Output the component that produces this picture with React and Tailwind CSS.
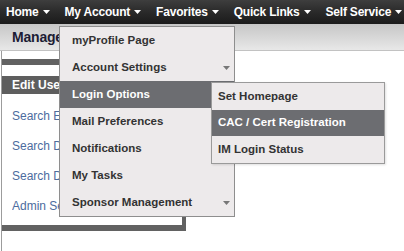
import React from 'react';

const Caret = ({ className }) => (
  <svg width="7" height="4" viewBox="0 0 7 4" className={className}>
    <path d="M0 0h7L3.5 4z" fill="currentColor" />
  </svg>
);

const navItems = ['Home', 'My Account', 'Favorites', 'Quick Links', 'Self Service'];

const accountMenu = [
  { label: 'myProfile Page' },
  { label: 'Account Settings', caret: true },
  { label: 'Login Options', active: true },
  { label: 'Mail Preferences' },
  { label: 'Notifications' },
  { label: 'My Tasks' },
  { label: 'Sponsor Management', caret: true },
];

const loginMenu = [
  { label: 'Set Homepage' },
  { label: 'CAC / Cert Registration', active: true },
  { label: 'IM Login Status' },
];

const links = ['Search Employees', 'Search Dependents', 'Search Documents', 'Admin Settings'];

export default function App() {
  return (
    <div className="relative w-[404px] h-[251px] overflow-hidden bg-white font-['Liberation_Sans',Arial,sans-serif]">
      {/* top nav */}
      <div className="h-[24px] flex items-center gap-[15px] pl-[6px] bg-gradient-to-b from-[#3e3e3e] via-[#2a2a2a] to-[#1b1b1b]">
        {navItems.map((item) => (
          <div key={item} className="flex items-center text-white text-[12px] font-bold tracking-[-0.2px] whitespace-nowrap">
            {item}
            <Caret className="ml-[4px] text-white" />
          </div>
        ))}
      </div>

      {/* page title bar */}
      <div className="h-[27px] flex items-center pl-[12px] border-b border-solid border-[#c2c2c2] bg-gradient-to-b from-[#c6c6c6] to-[#e8e8e8]">
        <span className="max-w-[47px] overflow-hidden whitespace-nowrap text-[14px] font-bold text-[#1c1c34] tracking-[-0.2px]">Manage Users</span>
      </div>

      {/* content, partly hidden behind the open menu */}
      <div className="h-[200px] flex">
        <div className="w-px bg-[#9c9c9c] ml-px" />
        <div className="pt-[8px]">
          <div className="w-[184px] bg-[#626262] pt-[6px] pr-[4px] pb-[6px]">
            <div className="bg-white pt-[11px] pb-[4px]">
              <div className="h-[18px] flex items-center pl-[10px] bg-[#5e5e5e]">
                <span className="max-w-[47px] overflow-hidden whitespace-nowrap text-white text-[12px] font-bold">Edit User Accounts</span>
              </div>
              <div className="mt-[7px]">
                {links.map((l) => (
                  <div key={l} className="h-[30px] flex items-center pl-[10px]">
                    <span className="max-w-[47px] overflow-hidden whitespace-nowrap text-[12px] text-[#4c6c9e]">{l}</span>
                  </div>
                ))}
              </div>
            </div>
          </div>
        </div>
      </div>

      {/* My Account dropdown */}
      <div className="absolute left-[59px] top-[26px] w-[176px] border border-solid border-[#8e8e8e] bg-[#edeaeb]">
        {accountMenu.map((m) => (
          <div
            key={m.label}
            className={`h-[27px] flex items-center justify-between pl-[12px] pr-[4px] text-[11.5px] font-bold whitespace-nowrap ${
              m.active ? 'bg-[#6c6d71] text-white' : 'text-[#333333]'
            }`}
          >
            {m.label}
            {m.caret && <Caret className="text-[#777777]" />}
          </div>
        ))}
      </div>

      {/* Login Options submenu */}
      <div className="absolute left-[211px] top-[82px] w-[174px] border border-solid border-[#9a9a9a] bg-[#edeaeb] shadow-[1px_1px_2px_rgba(0,0,0,0.12)]">
        {loginMenu.map((m) => (
          <div
            key={m.label}
            className={`h-[26.6px] flex items-center pl-[6px] text-[11.5px] font-bold whitespace-nowrap ${
              m.active ? 'bg-[#6c6d71] text-white' : 'text-[#333333]'
            }`}
          >
            {m.label}
          </div>
        ))}
      </div>
    </div>
  );
}
